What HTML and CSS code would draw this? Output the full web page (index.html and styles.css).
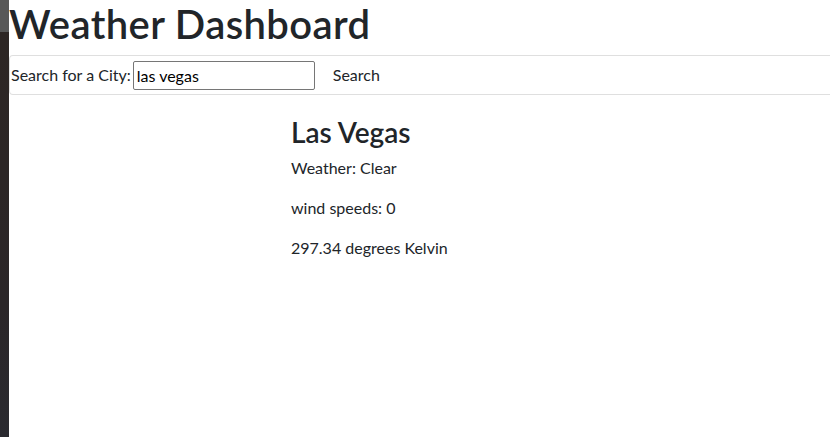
FILE: index.html
```html
<!DOCTYPE html>
<html lang="en">
<head>
<meta charset="utf-8">
<title>Weather Dashboard</title>
<link rel="stylesheet" href="styles.css">
</head>
<body>
<div class="strip"></div>
<div class="page">
  <h1 class="title">Weather Dashboard</h1>
  <div class="card">
    <form class="search-form">
      <label class="search-label" for="city">Search for a City:</label>
      <input class="search-input" id="city" type="text" value="las vegas">
      <button class="search-btn" type="button">Search</button>
    </form>
  </div>
  <div class="results">
    <div class="result-col">
      <h2 class="city-name">Las Vegas</h2>
      <p class="info">Weather: Clear</p>
      <p class="info">wind speeds: 0</p>
      <p class="info">297.34 degrees Kelvin</p>
    </div>
  </div>
</div>
</body>
</html>
```
FILE: styles.css
```css
html, body {
  margin: 0;
  padding: 0;
  height: 100%;
}
body {
  display: flex;
  background: #fff;
  color: #212529;
  font-family: Lato, "Open Sans", sans-serif;
  font-size: 16px;
  line-height: 1.5;
  overflow: hidden;
}
.strip {
  width: 9px;
  flex: none;
  background: linear-gradient(to bottom, #585858 0, #585858 32px, #2d2624 32px, #2b2628 70%, #2a2a30 100%);
}
.page {
  flex: 1;
  min-width: 0;
}
.title {
  margin: 0 0 7px;
  font-size: 40px;
  font-weight: 600;
  line-height: 1.2;
  letter-spacing: 0.4px;
}
.card {
  border: 1px solid rgba(0,0,0,.125);
  border-right: none;
  border-radius: 4px 0 0 4px;
}
.search-form {
  display: flex;
  align-items: center;
  margin: 0;
}
.search-label {
  padding-left: 1px;
}
.search-input {
  box-sizing: border-box;
  width: 182px;
  height: 29px;
  margin-left: 2px;
  padding: 1px 3px;
  border: 1px solid #767676;
  border-radius: 2px;
  font: inherit;
  color: #000;
}
.search-btn {
  margin-left: 5px;
  padding: 6px 12px;
  border: 1px solid transparent;
  background: transparent;
  font: inherit;
  line-height: 24px;
  color: #212529;
}
.results {
  padding-left: 282px;
  padding-top: 21px;
}
.city-name {
  margin: 0 0 6px;
  font-size: 28px;
  font-weight: 600;
  line-height: 1.2;
}
.info {
  margin: 0 0 16px;
}
```
